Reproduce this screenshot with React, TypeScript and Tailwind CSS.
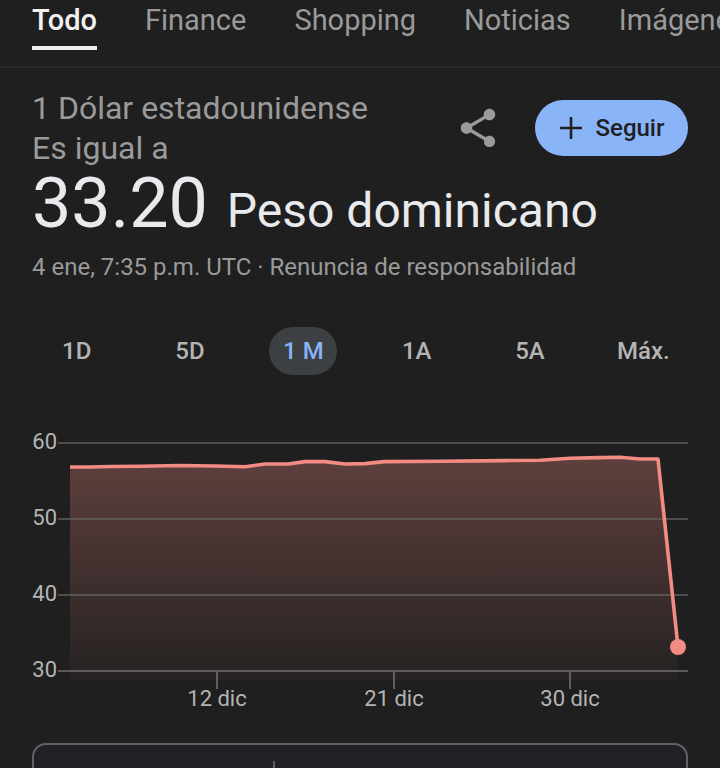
const tabs = ["Finance", "Shopping", "Noticias", "Imágenes"];
const ranges = ["1D", "5D", "1 M", "1A", "5A", "Máx."];

const linePoints =
  "70,467 90,467 110,466.5 140,466.3 180,465.5 215,466 245,466.8 265,464 288,464 305,461.6 325,461.6 345,464 365,463.6 384,461.6 440,461.2 505,460.6 540,460.2 570,458.3 600,457.6 620,457.3 640,459 658,459 678,647";

const Chart = () => {
  return (
    <svg width="720" height="290" viewBox="0 420 720 290" className="block">
      <defs>
        <linearGradient id="area" x1="0" y1="0" x2="0" y2="1">
          <stop offset="0" stopColor="#f28b82" stopOpacity="0.3" />
          <stop offset="1" stopColor="#f28b82" stopOpacity="0.03" />
        </linearGradient>
      </defs>
      <polygon points={`${linePoints} 678,681 70,681`} fill="url(#area)" />
      {[443, 519, 595].map((y) => (
        <line key={y} x1="58" x2="688" y1={y} y2={y} stroke="#5f5f5f" strokeWidth="1.5" />
      ))}
      <line x1="58" x2="688" y1="671" y2="671" stroke="#6f6f6f" strokeWidth="1.5" />
      {[217, 394, 570].map((x) => (
        <line key={x} x1={x} x2={x} y1="672" y2="689" stroke="#757575" strokeWidth="1.5" />
      ))}
      <polyline points={linePoints} fill="none" stroke="#f28b82" strokeWidth="3.6" strokeLinejoin="round" />
      <circle cx="678" cy="647" r="8" fill="#f28b82" />
      <g fill="#b4b4b4" fontSize="22" fontFamily="Roboto, sans-serif">
        {[
          ["60", 449],
          ["50", 525],
          ["40", 601],
          ["30", 677],
        ].map(([label, y]) => (
          <text key={label} x="57" y={y} textAnchor="end">
            {label}
          </text>
        ))}
        <text x="217" y="706" textAnchor="middle">12 dic</text>
        <text x="394" y="706" textAnchor="middle">21 dic</text>
        <text x="570" y="706" textAnchor="middle">30 dic</text>
      </g>
    </svg>
  );
};

export default function App() {
  return (
    <div className="w-[720px] h-[768px] overflow-hidden bg-[#1f1f1f] font-['Roboto',sans-serif]">
      <nav className="h-[68px] border-b-2 border-[#2a2a2a] flex pl-[32px] gap-[48px] text-[29px] leading-[40px] whitespace-nowrap text-[#9a9a9a] overflow-hidden">
        <div className="relative h-[50px] text-[#f1f1f1] font-medium">
          Todo
          <div className="absolute left-0 right-0 bottom-0 h-[4px] bg-[#f1f1f1]" />
        </div>
        {tabs.map((tab) => (
          <div key={tab}>{tab}</div>
        ))}
      </nav>

      <section className="px-[32px] pt-[20px] flex justify-between">
        <div className="text-[32px] leading-[40px] text-[#9a9a9a]">
          <div>1 Dólar estadounidense</div>
          <div>Es igual a</div>
        </div>
        <div className="flex items-center gap-[34px] h-[56px] mt-[12px]">
          <svg width="46" height="48" viewBox="0 0 24 24" fill="#9a9a9a">
            <path d="M18 16.08c-.76 0-1.44.3-1.96.77L8.91 12.7c.05-.23.09-.46.09-.7s-.04-.47-.09-.7l7.05-4.11c.54.5 1.25.81 2.04.81 1.66 0 3-1.34 3-3s-1.34-3-3-3-3 1.34-3 3c0 .24.04.47.09.7L8.04 9.81C7.5 9.31 6.79 9 6 9c-1.66 0-3 1.34-3 3s1.34 3 3 3c.79 0 1.5-.31 2.04-.81l7.12 4.16c-.05.21-.08.43-.08.65 0 1.61 1.31 2.92 2.92 2.92s2.92-1.31 2.92-2.92-1.31-2.92-2.92-2.92z" />
          </svg>
          <button className="h-[56px] w-[153px] rounded-full bg-[#8ab4f8] flex items-center justify-center gap-[13px] text-[#202124] text-[24px] font-medium">
            <svg width="24" height="24" viewBox="0 0 24 24" stroke="#202124" strokeWidth="2.6" fill="none">
              <path d="M12 1v22M1 12h22" />
            </svg>
            Seguir
          </button>
        </div>
      </section>

      <div className="px-[32px] flex items-baseline gap-[19px] text-[#e8eaed]">
        <span className="text-[70px] leading-[70px]">33.20</span>
        <span className="text-[48px] leading-[70px]">Peso dominicano</span>
      </div>

      <div className="px-[32px] mt-[5px] text-[24px] leading-[32px] text-[#9a9a9a]">
        4 ene, 7:35 p.m. UTC · Renuncia de responsabilidad
      </div>

      <div className="mt-[44px] px-[20px] grid grid-cols-6 text-[24px] font-medium text-[#b4b4b4]">
        {ranges.map((range) => (
          <div key={range} className="flex justify-center">
            <div
              className={
                range === "1 M"
                  ? "h-[48px] w-[68px] justify-center rounded-full bg-[#3c4043] text-[#8ab4f8] flex items-center"
                  : "h-[48px] flex items-center"
              }
            >
              {range}
            </div>
          </div>
        ))}
      </div>

      <div className="mt-[45px]">
        <Chart />
      </div>

      <div className="mx-[32px] mt-[33px] h-[60px] rounded-[14px] border-2 border-[#5f6368] bg-[#202124] relative">
        <div className="absolute left-[239px] top-[16px] bottom-0 w-[2px] bg-[#5f6368]" />
      </div>
    </div>
  );
}
